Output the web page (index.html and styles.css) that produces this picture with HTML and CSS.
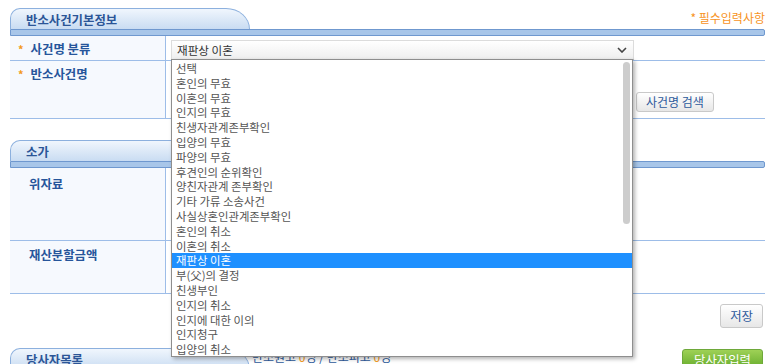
FILE: index.html
```html
<!DOCTYPE html>
<html>
<head>
    <title>반소사건기본정보</title>
    <link rel="stylesheet" href="styles.css">
</head>
<body>
    <div class="page">
        <div class="sec-head">
            <div class="tab">반소사건기본정보</div>
            <div class="required-note">* 필수입력사항</div>
        </div>
        <div class="sec-bar"></div>

        <div class="form-table">
            <div class="label"><span class="star">*</span>사건명 분류</div>
            <div class="cell row-select">
                <div class="select">
                    <span>재판상 이혼</span>
                    <svg class="chevron" width="10" height="6" viewBox="0 0 10 6"><path d="M1 1 L5 5 L9 1" fill="none" stroke="#444" stroke-width="1.6"/></svg>
                </div>
            </div>
            <div class="label tall"><span class="star">*</span>반소사건명</div>
            <div class="cell row-name">
                <div class="text-input"></div>
                <button class="btn">사건명 검색</button>
            </div>
        </div>

        <div class="sec-head second">
            <div class="tab">소가</div>
        </div>
        <div class="sec-bar"></div>

        <div class="form-table">
            <div class="label plain row-wija">위자료</div>
            <div class="cell row-wija"></div>
            <div class="label plain row-asset">재산분할금액</div>
            <div class="cell row-asset"></div>
        </div>

        <div class="save-row">
            <button class="btn save">저장</button>
        </div>

        <div class="sec-head third">
            <div class="tab">당사자목록</div>
            <div class="party-count">반소원고 <b>0</b>명 / 반소피고 <b>0</b>명</div>
            <button class="btn-green">당사자입력</button>
        </div>

        <!-- 열린 선택 목록 -->
        <div class="dropdown">
            <div class="opt">선택</div>
            <div class="opt">혼인의 무효</div>
            <div class="opt">이혼의 무효</div>
            <div class="opt">인지의 무효</div>
            <div class="opt">친생자관계존부확인</div>
            <div class="opt">입양의 무효</div>
            <div class="opt">파양의 무효</div>
            <div class="opt">후견인의 순위확인</div>
            <div class="opt">양친자관계 존부확인</div>
            <div class="opt">기타 가류 소송사건</div>
            <div class="opt">사실상혼인관계존부확인</div>
            <div class="opt">혼인의 취소</div>
            <div class="opt">이혼의 취소</div>
            <div class="opt selected">재판상 이혼</div>
            <div class="opt">부(父)의 결정</div>
            <div class="opt">친생부인</div>
            <div class="opt">인지의 취소</div>
            <div class="opt">인지에 대한 이의</div>
            <div class="opt">인지청구</div>
            <div class="opt">입양의 취소</div>
            <div class="scroll-thumb"></div>
        </div>
    </div>
</body>
</html>
```

FILE: styles.css
```css
body {
    margin: 0;
    padding: 0;
    font-family: "Noto Sans CJK KR", "Noto Sans", sans-serif;
    font-size: 12px;
    background-color: #ffffff;
    overflow: hidden;
}

.page {
    position: relative;
    width: 755px;
    padding: 8px 0 0 10px;
}

/* 섹션 헤더 탭 */
.sec-head {
    display: flex;
    align-items: flex-end;
    height: 21px;
}

.sec-head.second {
    margin-top: 21px;
}

.sec-head.third {
    margin-top: 20px;
    align-items: flex-start;
}

.tab {
    box-sizing: border-box;
    width: 240px;
    height: 21px;
    padding-left: 15px;
    border: 1px solid #8cb0de;
    border-bottom: 0;
    border-radius: 10px 24px 0 0 / 10px 21px 0 0;
    background: linear-gradient(#f0f6fd, #c9dcf2);
    color: #2b5597;
    font-weight: bold;
    font-size: 12.4px;
    line-height: 22px;
    flex-shrink: 0;
}

.required-note {
    margin-left: auto;
    align-self: flex-start;
    margin-top: 2px;
    color: #f7931e;
    font-size: 12px;
    line-height: 16px;
}

.sec-bar {
    height: 5px;
    border: 1px solid #6f98cf;
    border-radius: 0 2px 2px 0;
    background-color: #a8c6e9;
}

/* 입력 표 */
.form-table {
    display: grid;
    grid-template-columns: 156px 1fr;
}

.label,
.cell {
    border-bottom: 1px solid #9dbde8;
}

.label {
    box-sizing: border-box;
    border-right: 1px solid #9dbde8;
    padding: 5px 0 0 8px;
    background-color: #f6f9fe;
    color: #26559b;
    font-weight: bold;
    font-size: 12.4px;
    line-height: 16px;
}

.label.plain {
    padding: 6px 0 0 19px;
}

.star {
    color: #f39a1b;
    margin-right: 7px;
    font-size: 11px;
}

.row-select {
    height: 25px;
    padding: 4px 0 0 5px;
    box-sizing: border-box;
}

.select {
    box-sizing: border-box;
    display: flex;
    align-items: center;
    width: 463px;
    height: 20px;
    padding: 0 6px 0 5px;
    border: 1px solid #dcdcdc;
    border-bottom-color: #9a9a9a;
    background: linear-gradient(#ffffff, #efefef);
    color: #333;
    font-size: 11.6px;
}

.chevron {
    margin-left: auto;
}

.row-name {
    box-sizing: border-box;
    height: 58px;
    display: flex;
    align-items: flex-start;
    gap: 5px;
    padding: 31px 0 0 5px;
}

.text-input {
    width: 458px;
    height: 18px;
    border: 1px solid #c8c8c8;
}

.btn {
    height: 20px;
    padding: 0 9px;
    border: 1px solid #c9c9c9;
    border-radius: 3px;
    background: linear-gradient(#ffffff, #e7e7e7);
    color: #2d5a9c;
    font-family: "Noto Sans CJK KR", sans-serif;
    font-size: 12px;
    line-height: 18px;
}

.row-wija {
    height: 73px;
    box-sizing: border-box;
}

.label.row-wija {
    padding-top: 8px;
}

.row-asset {
    height: 53px;
    box-sizing: border-box;
}

.label.row-asset {
    padding-top: 6px;
}

.save-row {
    display: flex;
    justify-content: flex-end;
    padding: 10px 2px 0 0;
}

.btn.save {
    height: 24px;
    padding: 0 9px;
    font-size: 12.4px;
}

.party-count {
    margin: 2px 0 0 2px;
    color: #2d5a9c;
    font-size: 12px;
    line-height: 14px;
}

.party-count b {
    color: #f39a1b;
    font-weight: normal;
}

.btn-green {
    margin: 1px 2px 0 auto;
    width: 81px;
    height: 20px;
    border: 1px solid #6ea83a;
    border-radius: 3px;
    background: linear-gradient(#9ed156, #66ac2c);
    color: #ffffff;
    font-family: "Noto Sans CJK KR", sans-serif;
    font-size: 12.4px;
    line-height: 18px;
}

/* 펼쳐진 목록 */
.dropdown {
    position: absolute;
    left: 171px;
    top: 59px;
    width: 460px;
    height: 295px;
    padding-top: 1px;
    border: 1px solid #8e8e8e;
    background-color: #ffffff;
    box-shadow: 2px 2px 4px rgba(0, 0, 0, 0.3);
    overflow: hidden;
}

.opt {
    height: 14.8px;
    padding-left: 4px;
    color: #555;
    font-size: 11.4px;
    line-height: 14.8px;
    white-space: nowrap;
}

.opt.selected {
    background-color: #1e90ff;
    color: #ffffff;
}

.scroll-thumb {
    position: absolute;
    top: 2px;
    right: 2px;
    width: 7px;
    height: 162px;
    border-radius: 4px;
    background-color: #cdcdcd;
}
```
